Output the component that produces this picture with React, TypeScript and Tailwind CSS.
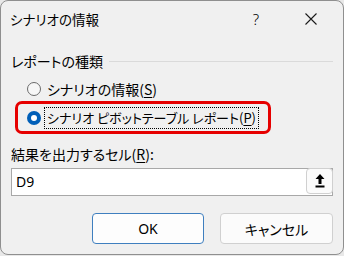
import React from "react";

const jp = "font-['Noto_Sans_CJK_JP','Noto_Sans',sans-serif] [font-feature-settings:'palt']";

export default function App() {
  return (
    <div className="w-[344px] h-[256px] bg-[#e8e8e8]">
      <div className={`w-[344px] h-[255px] rounded-[8px] border border-[#8f8f8f] bg-[#f0f0f0] flex flex-col text-[#000] ${jp}`}>
        {/* title bar */}
        <div className="h-[35px] flex items-center pl-[9px] pr-[11px] shrink-0">
          <span className="text-[13.5px] leading-[20px]">シナリオの情報</span>
          <div className="flex-1" />
          <span className="text-[15px] leading-[20px] font-['Noto_Sans',sans-serif] font-light mr-[46px]">?</span>
          <svg width="12" height="12" viewBox="0 0 12 12" className="mr-[15px]">
            <path d="M0.5 0.5 L11.5 11.5 M11.5 0.5 L0.5 11.5" stroke="#1a1a1a" strokeWidth="1.1" />
          </svg>
        </div>
        <div className="px-[10px] flex flex-col">
          {/* group label */}
          <div className="mt-[15px] h-[20px] flex items-center gap-[6px]">
            <span className="text-[14px] leading-[20px]">レポートの種類</span>
            <div className="flex-1 h-px bg-[#dadada]" />
          </div>
          {/* radio 1 */}
          <div className="mt-[8px] h-[20px] flex items-center pl-[16px] gap-[6px]">
            <span className="w-[14px] h-[14px] rounded-full border border-[#6b6b6b] bg-[#f7f7f7] shrink-0" />
            <span className="text-[14px] leading-[20px]">
              シナリオの情報(<span className="underline underline-offset-2">S</span>)
            </span>
          </div>
          {/* red highlight with radio 2 */}
          <div className="mt-[2px] ml-[4px] w-[256px] h-[33px] rounded-[7px] border-[3px] border-[#e60000] flex items-center pl-[9px] gap-[4px]">
            <span className="w-[14px] h-[14px] rounded-full bg-[#005fb8] flex items-center justify-center shrink-0">
              <span className="w-[6px] h-[6px] rounded-full bg-white" />
            </span>
            <span className="text-[13px] leading-[20px] outline outline-1 outline-dotted outline-[#000] px-[2px] whitespace-nowrap">
              シナリオ ピボットテーブル レポート(<span className="underline underline-offset-2">P</span>)
            </span>
          </div>
          {/* result label */}
          <div className="mt-[10px] h-[20px] flex items-center">
            <span className="text-[14px] leading-[20px]">
              結果を出力するセル(<span className="underline underline-offset-2">R</span>):
            </span>
          </div>
          {/* input */}
          <div className="mt-[4px] h-[28px] bg-white border border-[#a8a8a8] flex items-start">
            <span className="flex-1 pl-[4px] text-[14px] leading-[26px] font-['Noto_Sans',sans-serif]">D9</span>
            <div className="w-[27px] h-[26px] rounded-[4px] border border-[#d0d0d0] bg-[#fbfbfb] flex items-center justify-center mr-[-1px] mt-[-1px]">
              <svg width="10" height="14" viewBox="0 0 10 14">
                <path d="M5 0 L9.5 5 L6.5 5 L6.5 10 L3.5 10 L3.5 5 L0.5 5 Z" fill="#000" />
                <rect x="0.5" y="11.5" width="9" height="2" fill="#000" />
              </svg>
            </div>
          </div>
          {/* buttons */}
          <div className="mt-[17px] flex justify-end gap-[16px]">
            <div className="w-[112px] h-[31px] rounded-[4px] border border-[#3f7fbf] bg-[#fdfdfd] flex items-center justify-center">
              <span className="text-[14px] font-['Noto_Sans',sans-serif]">OK</span>
            </div>
            <div className="w-[113px] h-[31px] rounded-[4px] border border-[#d0d0d0] bg-[#fbfbfb] flex items-center justify-center">
              <span className="text-[14px] leading-[20px]">キャンセル</span>
            </div>
          </div>
        </div>
      </div>
    </div>
  );
}
